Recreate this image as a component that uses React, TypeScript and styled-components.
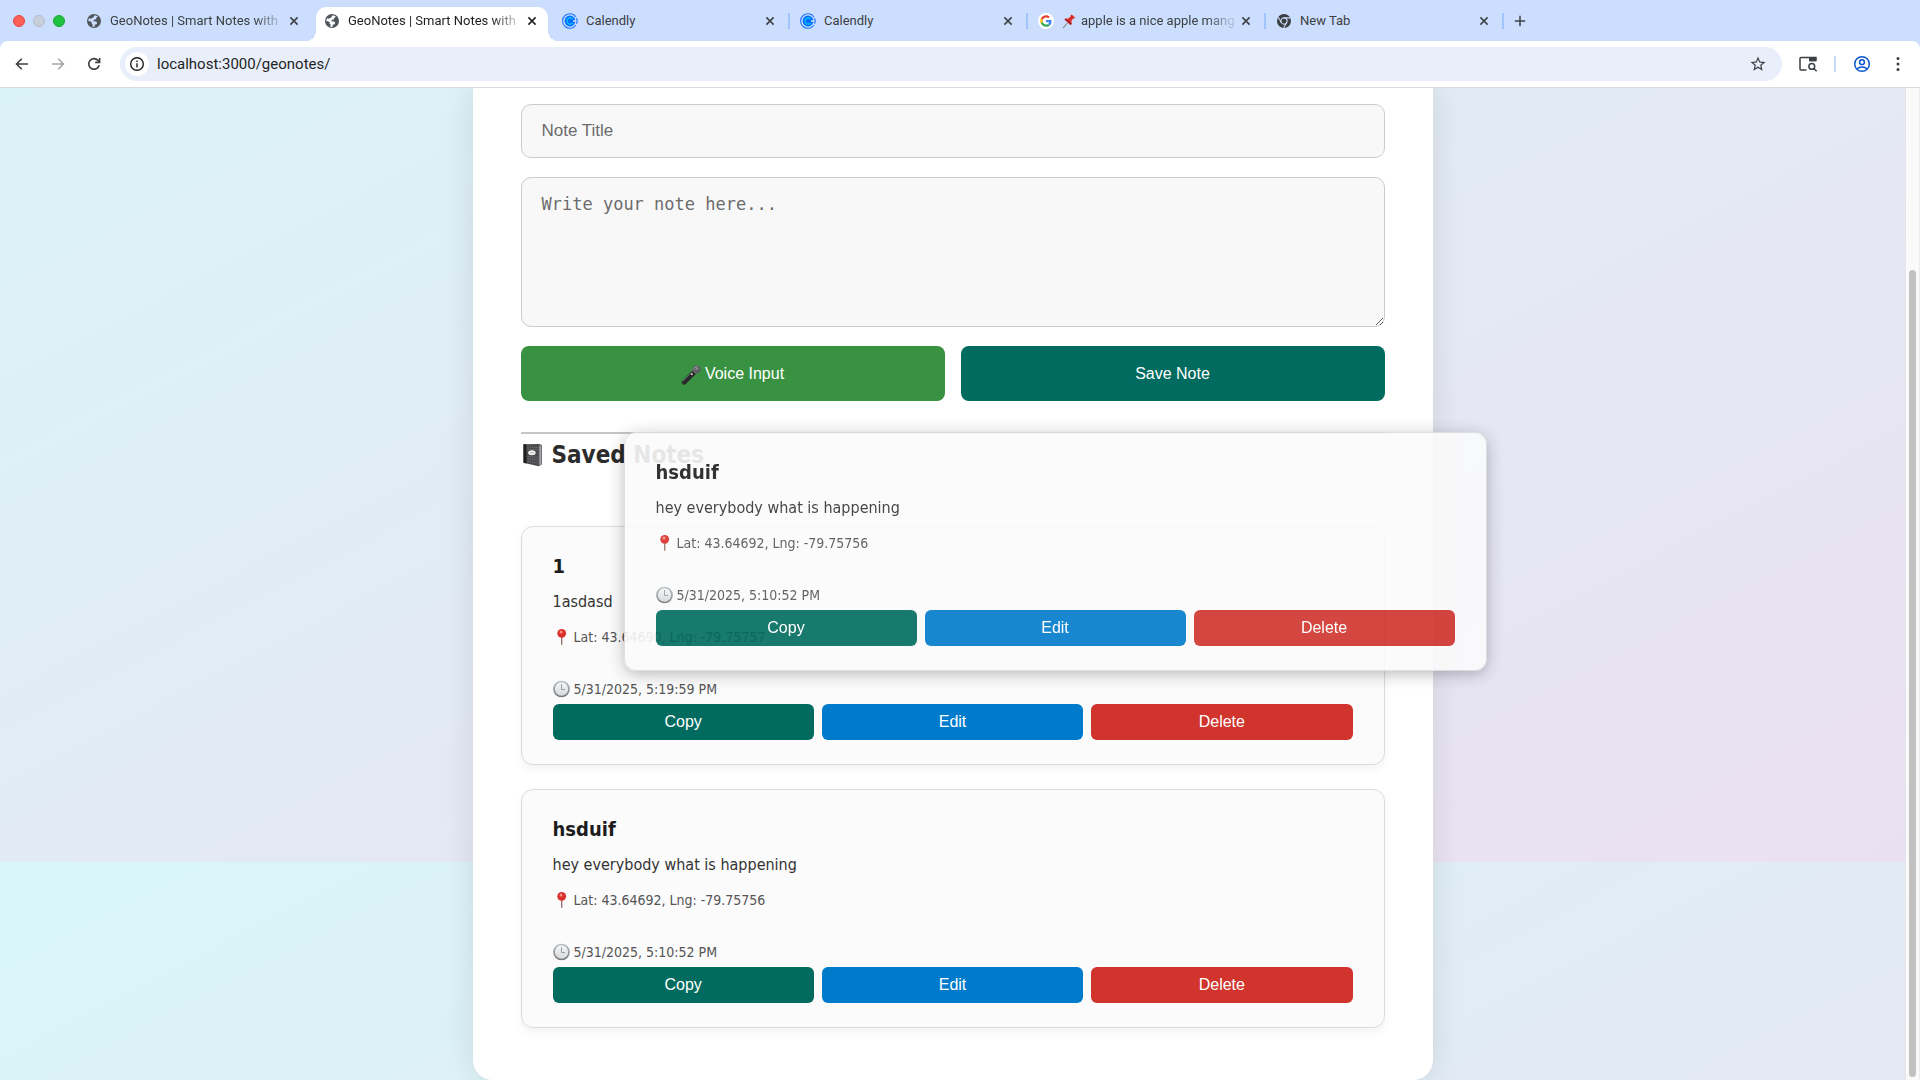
import React from 'react';
import styled, { createGlobalStyle } from 'styled-components';

const TAHOMA = '"DejaVu Sans Condensed", "DejaVu Sans", Tahoma, sans-serif';
const ARIAL = '"Liberation Sans", Arial, sans-serif';
const CHROME = 'Roboto, "Liberation Sans", sans-serif';

const GlobalStyle = createGlobalStyle`
  *, *::before, *::after { box-sizing: border-box; }
  body { margin: 0; overflow: hidden; }
  button, input, textarea { margin: 0; }
  svg { display: block; flex: none; }
`;

const Window = styled.div`
  display: flex;
  flex-direction: column;
  height: 100vh;
  overflow: hidden;
  background: #ccdefd;
`;

/* ---------- Browser chrome ---------- */

const TabStrip = styled.header`
  display: flex;
  flex: none;
  align-items: center;
  height: 41px;
  padding-left: 13px;
  color: #3c4043;
  font-family: ${CHROME};
`;

const Lights = styled.div`
  display: flex;
  gap: 8px;
  width: 65px;
`;

const Light = styled.button<{ $fill: string; $edge: string }>`
  width: 12px;
  height: 12px;
  padding: 0;
  border: 1px solid ${(p) => p.$edge};
  border-radius: 50%;
  background: ${(p) => p.$fill};
`;

const Tabs = styled.nav`
  display: flex;
  gap: 6px;
  height: 100%;
  padding: 7px 6px 0 0;
`;

const Tab = styled.div<{ $active?: boolean; $divided?: boolean }>`
  position: relative;
  display: flex;
  align-items: center;
  width: 232px;
  padding: 0 8px 6px;
  border-radius: 10px 10px 0 0;
  background: ${(p) => (p.$active ? '#fff' : 'transparent')};
  color: ${(p) => (p.$active ? '#1f1f1f' : '#3c4043')};

  &::before, &::after {
    content: '';
    position: absolute;
    bottom: 0;
    display: ${(p) => (p.$active ? 'block' : 'none')};
    width: 10px;
    height: 10px;
  }
  &::before {
    left: -10px;
    background: radial-gradient(circle at 0 0, transparent 10px, #fff 10px);
  }
  &::after {
    right: -10px;
    background: radial-gradient(circle at 100% 0, transparent 10px, #fff 10px);
  }
  ${(p) =>
    p.$divided &&
    `&::after {
      display: block;
      right: -4px;
      bottom: 12px;
      width: 2px;
      height: 16px;
      background: #a3c3fa;
    }`}
`;

const TabTitle = styled.a<{ $fade?: boolean }>`
  display: flex;
  flex: 1;
  align-items: center;
  gap: 5px;
  min-width: 0;
  margin-left: 8px;
  overflow: hidden;
  color: inherit;
  font-size: 13px;
  line-height: 18px;
  white-space: nowrap;
  text-decoration: none;
  ${(p) => p.$fade && 'mask-image: linear-gradient(to right, #000 82%, rgba(0, 0, 0, 0.2) 96%);'}
`;

const IconButton = styled.button<{ $size: number }>`
  display: flex;
  flex: none;
  align-items: center;
  justify-content: center;
  width: ${(p) => p.$size}px;
  height: ${(p) => p.$size}px;
  padding: 0;
  border: 0;
  background: none;
  color: inherit;
`;

const Toolbar = styled.div`
  display: flex;
  flex: none;
  align-items: center;
  height: 47px;
  padding: 0 12px 0 8px;
  border-bottom: 1px solid #d9dadc;
  border-radius: 8px 8px 0 0;
  background: #fff;
  color: #3c4043;
  font-family: ${CHROME};
`;

const NavButtons = styled.div`
  display: flex;
  gap: 8px;
  width: 112px;
`;

const Omnibox = styled.div`
  display: flex;
  flex: 1;
  align-items: center;
  height: 34px;
  padding: 0 10px 0 5px;
  border-radius: 17px;
  background: #e8effa;
`;

const SiteInfo = styled.button`
  display: flex;
  align-items: center;
  justify-content: center;
  width: 24px;
  height: 24px;
  padding: 0;
  border: 0;
  border-radius: 50%;
  background: #fff;
  color: #1f1f1f;
`;

const Address = styled.input`
  flex: 1;
  min-width: 0;
  padding: 0 8px;
  border: 0;
  outline: 0;
  background: none;
  color: #1f1f1f;
  font: 15px/20px ${CHROME};
`;

const Actions = styled.div`
  display: flex;
  align-items: center;
  gap: 12px;
  padding-left: 12px;
`;

const ActionDivider = styled.span`
  width: 2px;
  height: 16px;
  background: #c9dcfb;
`;

/* ---------- Page ---------- */

const Viewport = styled.div`
  display: flex;
  flex: 1;
  min-height: 0;
`;

const Page = styled.main`
  flex: 1;
  min-width: 0;
  overflow: hidden;
  background: linear-gradient(to bottom right, #d9f6f8, #ebe0f1) 0 -219px / 100% calc(100vh - 87px);
  font-family: ${TAHOMA};
`;

const ScrollTrack = styled.div`
  flex: none;
  width: 15px;
  padding: 182px 3px 3px;
  border-left: 1px solid #e4e4e4;
  border-right: 1px solid #ececec;
  background: #fafafa;
`;

const ScrollThumb = styled.div`
  height: 100%;
  border-radius: 4px;
  background: #c1c1c1;
`;

const Container = styled.div`
  position: relative;
  width: 960px;
  max-width: 100%;
  margin: 0 auto;
  padding: 16px 48px 52px;
  border-radius: 0 0 20px 20px;
  background: #fff;
  box-shadow: 0 0 32px rgba(0, 0, 0, 0.1);
`;

const Form = styled.form`
  display: flex;
  flex-direction: column;
  gap: 19px;
`;

const TitleInput = styled.input`
  height: 54px;
  padding: 0 20px;
  border: 1px solid #ccc;
  border-radius: 10px;
  background: #f8f8f8;
  color: #222;
  font: 17px/24px ${ARIAL};
  &::placeholder { color: #6c6c6c; opacity: 1; }
`;

const BodyInput = styled.textarea`
  height: 150px;
  padding: 16px 20px;
  border: 1px solid #ccc;
  border-radius: 10px;
  background: #f8f8f8;
  color: #222;
  font: 17px/20px "DejaVu Sans Mono", Menlo, monospace;
  resize: vertical;
  &::placeholder { color: #6c6c6c; opacity: 1; }
`;

const FormButtons = styled.div`
  display: grid;
  grid-template-columns: 1fr 1fr;
  gap: 16px;
`;

const BigButton = styled.button<{ $bg: string }>`
  display: flex;
  align-items: center;
  justify-content: center;
  gap: 4px;
  height: 55px;
  border: 0;
  border-radius: 8px;
  background: ${(p) => p.$bg};
  color: #fff;
  font: 16px/20px ${ARIAL};
`;

const Rule = styled.hr`
  height: 2px;
  margin: 31px 0 7px;
  border: 0;
  background: #c6c6c6;
`;

const SectionTitle = styled.h2`
  display: flex;
  align-items: center;
  gap: 8px;
  margin: 0 0 57px;
  color: #2c2c2c;
  font-size: 24px;
  line-height: 28px;
`;

const NoteList = styled.div`
  display: flex;
  flex-direction: column;
  gap: 24px;
`;

const Card = styled.article`
  padding: 24px 31px;
  border: 1px solid #dcdcdc;
  border-radius: 12px;
  background: #fbfbfb;
  box-shadow: 0 4px 10px rgba(0, 0, 0, 0.05);
`;

const DragGhost = styled.div`
  position: absolute;
  top: 344px;
  left: 151px;
  width: 863px;
  border-radius: 12px;
  box-shadow: 0 3px 18px rgba(0, 0, 0, 0.26);
  opacity: 0.9;
`;

const CardTitle = styled.h3`
  margin: 0 0 10px;
  color: #1c1c1c;
  font-size: 20px;
  line-height: 30px;
`;

const CardText = styled.p`
  margin: 0 0 12px;
  color: #333;
  font-size: 16px;
  line-height: 22px;
`;

const Meta = styled.p<{ $gap: number }>`
  display: flex;
  align-items: center;
  gap: 4px;
  margin: 0 0 ${(p) => p.$gap}px;
  color: #555;
  font-size: 14px;
  line-height: 24px;
`;

const CardButtons = styled.div`
  display: grid;
  grid-template-columns: repeat(3, 1fr);
  gap: 8px;
`;

const SmallButton = styled.button<{ $bg: string }>`
  height: 36px;
  padding: 0;
  border: 0;
  border-radius: 6px;
  background: ${(p) => p.$bg};
  color: #fff;
  font: 16px/20px ${ARIAL};
`;

/* ---------- Icons ---------- */

const Globe = ({ land }: { land: string }) => (
  <svg width="16" height="16" viewBox="0 0 16 16">
    <circle cx="8" cy="8" r="7" fill="#50565c" />
    <path d="M8.800 2.200c1.200.1 2.300.7 3.100 1.500L10.300 4.700l-.4 1.600-2.200.6-.5 1.300 3 .2 1 1.500-.8 1.300-1.600.5-.2 2c-.9.2-1.700.1-2.500-.1l.7-1.800-1.300-1.500.2-1.200L2.200 7.700c.1-.9.400-1.700.8-2.400l2 .5 2.100-1.200z" fill={land} />
  </svg>
);

const Calendly = () => (
  <svg width="16" height="16" viewBox="0 0 16 16" fill="none">
    <circle cx="8" cy="8" r="5.400" fill="#006bff" />
    <path d="M14 4A7.300 7.300 0 1 0 14 12" stroke="#1a75ff" strokeWidth="1.100" />
    <path d="M14.400 5.200c.9 1.700.9 3.900 0 5.600" stroke="#1a75ff" strokeWidth="1.200" />
    <path d="M10.700 6.200A3.100 3.100 0 1 0 10.700 9.800" stroke="#0ab5ff" strokeWidth="1.600" />
    <path d="M11 7.200h3.200v1.600H11z" fill="#ccdefd" />
  </svg>
);

const Google = () => (
  <svg width="16" height="16" viewBox="0 0 16 16">
    <circle cx="8" cy="8" r="8" fill="#fff" />
    <g transform="translate(2.200 2.200) scale(.242)">
      <path fill="#EA4335" d="M24 9.500c3.540 0 6.710 1.220 9.210 3.600l6.850-6.850C35.900 2.380 30.470 0 24 0 14.620 0 6.510 5.380 2.560 13.220l7.980 6.190C12.430 13.720 17.740 9.500 24 9.500z" />
      <path fill="#4285F4" d="M46.980 24.550c0-1.570-.15-3.090-.38-4.550H24v9.020h12.940c-.58 2.960-2.260 5.480-4.780 7.180l7.730 6c4.510-4.180 7.090-10.360 7.090-17.650z" />
      <path fill="#FBBC05" d="M10.530 28.590c-.48-1.450-.76-2.990-.76-4.590s.27-3.140.76-4.590l-7.980-6.190C.92 16.460 0 20.120 0 24c0 3.880.92 7.540 2.560 10.780l7.970-6.190z" />
      <path fill="#34A853" d="M24 48c6.480 0 11.930-2.130 15.890-5.810l-7.730-6c-2.150 1.450-4.920 2.300-8.160 2.300-6.260 0-11.570-4.220-13.470-9.910l-7.980 6.190C6.510 42.620 14.620 48 24 48z" />
    </g>
  </svg>
);

const ChromeMark = () => (
  <svg width="16" height="16" viewBox="0 0 16 16" fill="none">
    <circle cx="8" cy="8" r="7" fill="#3c4043" />
    <circle cx="8" cy="8" r="3.100" fill="#3c4043" stroke="#ccdefd" strokeWidth="1.100" />
    <path d="M8 4.900h6.200M5.300 9.500L2.300 4.300M10.700 9.500l-3 5.300" stroke="#ccdefd" strokeWidth="1.100" />
  </svg>
);

const Pushpin = () => (
  <svg width="14" height="15" viewBox="0 0 13 15">
    <path d="M4.800 9.200L.5 14.200" stroke="#8b9096" strokeWidth="1.200" />
    <path d="M9.300.6l3.200 2.800-1 1.300-.9-.1-1.700 2.300.4 2.900-1.200 1.200L2 5.600l1-1.100 2.900.1L8 2.500l.1-1z" fill="#d8302b" />
    <path d="M2 5.600l6.100 5.400 1.200-1.200L3 4.500z" fill="#a51f22" />
  </svg>
);

const Close = () => (
  <svg width="10" height="10" viewBox="0 0 10 10" stroke="currentColor" strokeWidth="1.500">
    <path d="M1.400 1.400l7.200 7.200M8.600 1.400L1.400 8.600" />
  </svg>
);

const Plus = () => (
  <svg width="12" height="12" viewBox="0 0 12 12" stroke="currentColor" strokeWidth="1.500">
    <path d="M6 .8v10.400M.8 6h10.400" />
  </svg>
);

const Arrow = ({ flip }: { flip?: boolean }) => (
  <svg width="20" height="20" viewBox="0 0 20 20" fill="none" stroke={flip ? '#a3a5a8' : 'currentColor'} strokeWidth="1.600">
    <path d={flip ? 'M4 10h11M10.200 4.700l5.300 5.300-5.300 5.300' : 'M16 10H5M9.800 4.700L4.500 10l5.300 5.300'} />
  </svg>
);

const Reload = () => (
  <svg width="20" height="20" viewBox="0 0 20 20" fill="none" stroke="currentColor" strokeWidth="1.600">
    <path d="M15.200 11.200A5.300 5.300 0 1 1 14 6.400l1.400 1.500" />
    <path d="M15.600 4v4.400h-4.400" />
  </svg>
);

const Info = () => (
  <svg width="16" height="16" viewBox="0 0 16 16" fill="none" stroke="currentColor" strokeWidth="1.400">
    <circle cx="8" cy="8" r="6.300" />
    <path d="M8 7.200v4.200M8 4.500v1.500" />
  </svg>
);

const Star = () => (
  <svg width="18" height="18" viewBox="0 0 24 24" fill="#3c4043">
    <path d="M22 9.240l-7.190-.62L12 2 9.190 8.630 2 9.240l5.460 4.730L5.820 21 12 17.270 18.180 21l-1.630-7.030L22 9.240zM12 15.400l-3.760 2.270 1-4.280-3.320-2.880 4.380-.38L12 6.100l1.710 4.040 4.380.38-3.320 2.880 1 4.280L12 15.400z" />
  </svg>
);

const TabSearch = () => (
  <svg width="20" height="18" viewBox="0 0 20 18" fill="none" stroke="#3c4043" strokeWidth="1.500">
    <path d="M8.500 15H3a1 1 0 0 1-1-1V3.600a1 1 0 0 1 1-1h14.800v3" />
    <path d="M11 2.200h7.500v4.200H11z" fill="#3c4043" stroke="none" />
    <circle cx="13.800" cy="11.400" r="2.900" />
    <path d="M15.900 13.500l2.800 2.800" />
  </svg>
);

const Profile = () => (
  <svg width="18" height="18" viewBox="0 0 18 18" fill="none" stroke="#0b57d0" strokeWidth="1.500">
    <circle cx="9" cy="9" r="7.300" />
    <circle cx="9" cy="7.200" r="2.400" />
    <path d="M3.800 14c2.800-2.700 7.600-2.700 10.400 0" />
  </svg>
);

const Dots = () => (
  <svg width="16" height="16" viewBox="0 0 16 16" fill="#3c4043">
    <circle cx="8" cy="2.600" r="1.500" />
    <circle cx="8" cy="8" r="1.500" />
    <circle cx="8" cy="13.400" r="1.500" />
  </svg>
);

const Microphone = () => (
  <svg width="20" height="24" viewBox="0 -3 20 24">
    <path d="M12 4.600l3.600 3.600L4.800 19.100c-1.500 1.400-4.700.2-3.900-2.600z" fill="#29292b" />
    <path d="M12.200 5.400L2 16.300" stroke="#6a6a6d" strokeWidth="1" />
    <path d="M11.300 4.600c.3-2.500 2.200-4.100 4.200-4.100 2.500 0 4.100 1.900 4 4.100-.1 2.100-1.700 4-4 4.200z" fill="#5c5c60" />
    <path d="M12.800 3.600c.8-1.400 2.500-2 3.800-1.500M14.400 5c.6-1 1.800-1.500 2.900-1" stroke="#b9b9bd" strokeWidth=".9" fill="none" />
    <path d="M11.200 4.600l4.300 4.300" stroke="#94949a" strokeWidth="1" />
    <circle cx="10.800" cy="9.200" r=".9" fill="#eee" />
  </svg>
);

const Notebook = () => (
  <svg width="23" height="24" viewBox="0 0 22 24">
    <path d="M2 1.300l15.500-.3 2.900 1v19.300l-3.200 2L2 19.800z" fill="#4a4a4c" />
    <path d="M17.300 2.500l3.100-.5v19.300l-3.200 2z" fill="#77777a" />
    <path d="M18.700 2.800v19" stroke="#c9c9cb" strokeWidth=".8" />
    <path d="M2 1.300h2.600l.4 19.200-3-.7z" fill="#1d1d1f" />
    <path d="M6 4l10 .5M6 6.200l10 .3M6.200 13.500l9.800 1M6.200 15.800l9.800 1.400M6.200 18.200l9.800 1.800" stroke="#77777a" strokeWidth="1" strokeDasharray="1.300 .9" />
    <ellipse cx="10.400" cy="9.800" rx="3.800" ry="2.500" fill="#f1f1f1" />
    <path d="M8.400 9.800h4" stroke="#9a9a9a" strokeWidth=".7" />
  </svg>
);

const MapPin = () => (
  <svg width="17" height="18" viewBox="0 0 17 18">
    <path d="M8.700 8v8.200" stroke="#9a7770" strokeWidth="1.400" strokeLinecap="round" />
    <circle cx="8.700" cy="5.300" r="4.400" fill="#d9302c" />
    <circle cx="8" cy="3.900" r="1.500" fill="#f78f86" />
  </svg>
);

const Clock = () => (
  <svg width="17" height="18" viewBox="0 0 17 18" fill="none">
    <defs>
      <linearGradient id="rim" x1="0" y1="0" x2="0" y2="1">
        <stop offset="0" stopColor="#b9c0c4" />
        <stop offset="1" stopColor="#77787a" />
      </linearGradient>
      <linearGradient id="dial" x1="0" y1="0" x2="0" y2="1">
        <stop offset="0" stopColor="#f6f8f9" />
        <stop offset="1" stopColor="#d6d7d9" />
      </linearGradient>
    </defs>
    <circle cx="8.500" cy="9" r="7.500" fill="url(#dial)" stroke="url(#rim)" strokeWidth="1.700" />
    <path d="M8.500 4.200v5.300h3.500" stroke="#9a9da0" strokeWidth="1" />
  </svg>
);

/* ---------- Composition ---------- */

type Note = { title: string; text: string; place: string; time: string };

const notes: Note[] = [
  { title: '1', text: '1asdasd', place: 'Lat: 43.64690, Lng: -79.75757', time: '5/31/2025, 5:19:59 PM' },
  { title: 'hsduif', text: 'hey everybody what is happening', place: 'Lat: 43.64692, Lng: -79.75756', time: '5/31/2025, 5:10:52 PM' },
];

const NoteCard = ({ note }: { note: Note }) => (
  <Card>
    <CardTitle>{note.title}</CardTitle>
    <CardText>{note.text}</CardText>
    <Meta $gap={28}><MapPin />{note.place}</Meta>
    <Meta $gap={3}><Clock />{note.time}</Meta>
    <CardButtons>
      <SmallButton $bg="#006b5e">Copy</SmallButton>
      <SmallButton $bg="#007bcc">Edit</SmallButton>
      <SmallButton $bg="#d0342c">Delete</SmallButton>
    </CardButtons>
  </Card>
);

const tabs = [
  { icon: <Globe land="#ccdefd" />, title: 'GeoNotes | Smart Notes with', fade: true },
  { icon: <Globe land="#fff" />, title: 'GeoNotes | Smart Notes with', fade: true, active: true },
  { icon: <Calendly />, title: 'Calendly', divided: true },
  { icon: <Calendly />, title: 'Calendly', divided: true },
  { icon: <Google />, title: 'apple is a nice apple mang', pin: true, fade: true, divided: true },
  { icon: <ChromeMark />, title: 'New Tab', divided: true },
];

export default function App() {
  return (
    <Window>
      <GlobalStyle />
      <TabStrip>
        <Lights>
          <Light $fill="#fe5f57" $edge="#e2473f" aria-label="Close window" />
          <Light $fill="#c8cfdb" $edge="#b4bccb" aria-label="Minimize window" />
          <Light $fill="#1fc13e" $edge="#16a532" aria-label="Zoom window" />
        </Lights>
        <Tabs>
          {tabs.map((t, i) => (
            <Tab key={i} $active={t.active} $divided={t.divided}>
              {t.icon}
              <TabTitle href="#" $fade={t.fade}>
                {t.pin && <Pushpin />}
                {t.title}
              </TabTitle>
              <IconButton $size={16} aria-label="Close tab"><Close /></IconButton>
            </Tab>
          ))}
        </Tabs>
        <IconButton $size={28} aria-label="New tab"><Plus /></IconButton>
      </TabStrip>

      <Toolbar>
        <NavButtons>
          <IconButton $size={28} aria-label="Back"><Arrow /></IconButton>
          <IconButton $size={28} aria-label="Forward"><Arrow flip /></IconButton>
          <IconButton $size={28} aria-label="Reload"><Reload /></IconButton>
        </NavButtons>
        <Omnibox>
          <SiteInfo aria-label="Site information"><Info /></SiteInfo>
          <Address aria-label="Address" defaultValue="localhost:3000/geonotes/" />
          <IconButton $size={28} aria-label="Bookmark"><Star /></IconButton>
        </Omnibox>
        <Actions>
          <IconButton $size={28} aria-label="Search tabs"><TabSearch /></IconButton>
          <ActionDivider />
          <IconButton $size={28} aria-label="Profile"><Profile /></IconButton>
          <IconButton $size={20} aria-label="Menu"><Dots /></IconButton>
        </Actions>
      </Toolbar>

      <Viewport>
        <Page>
          <Container>
            <Form onSubmit={(e) => e.preventDefault()}>
              <TitleInput aria-label="Note Title" placeholder="Note Title" />
              <BodyInput aria-label="Note text" placeholder="Write your note here..." />
              <FormButtons>
                <BigButton type="button" $bg="#399241"><Microphone />Voice Input</BigButton>
                <BigButton type="submit" $bg="#006b5e">Save Note</BigButton>
              </FormButtons>
            </Form>
            <Rule />
            <SectionTitle><Notebook />Saved Notes</SectionTitle>
            <NoteList>
              {notes.map((n) => <NoteCard key={n.title} note={n} />)}
            </NoteList>
            <DragGhost><NoteCard note={notes[1]} /></DragGhost>
          </Container>
        </Page>
        <ScrollTrack><ScrollThumb /></ScrollTrack>
      </Viewport>
    </Window>
  );
}
